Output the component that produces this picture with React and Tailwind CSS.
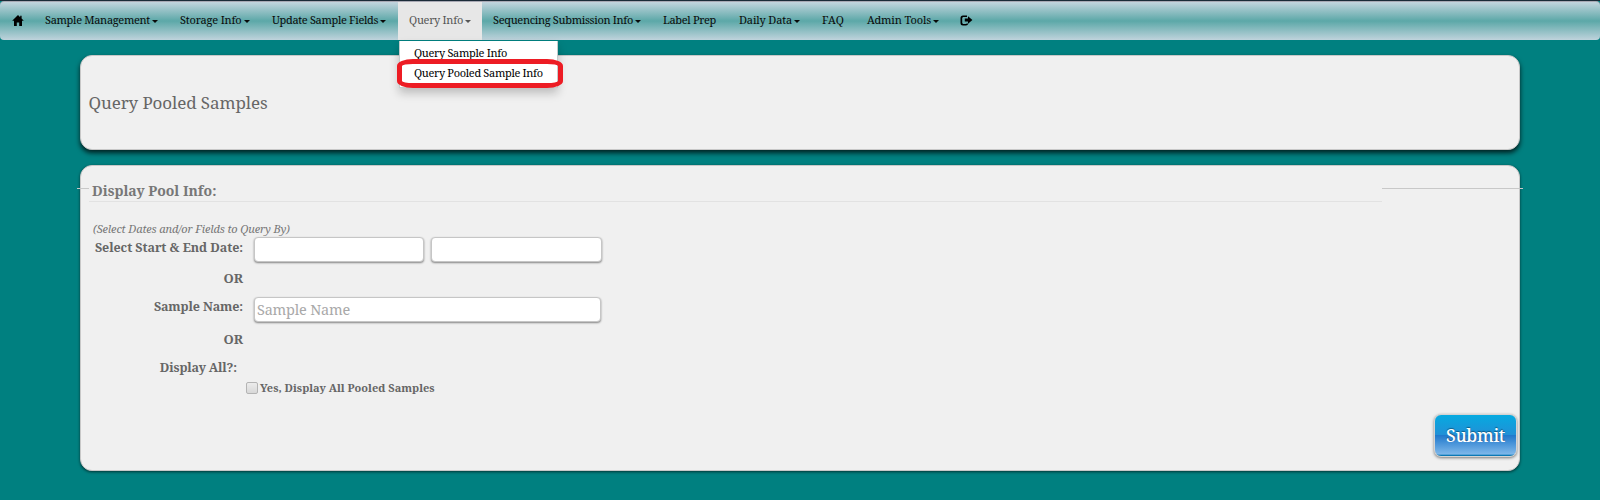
import React from "react";

const NAV = [
  { label: "Sample Management", box: "w-[135px]", track: "tracking-[-0.32px]", caret: true },
  { label: "Storage Info", box: "w-[92px]", track: "tracking-[-0.17px]", caret: true },
  { label: "Update Sample Fields", box: "w-[137px]", track: "tracking-[-0.33px]", caret: true },
  { label: "Query Info", box: "w-[84px]", track: "tracking-[-0.28px]", caret: true, open: true },
  { label: "Sequencing Submission Info", box: "w-[170px]", track: "tracking-[-0.32px]", caret: true },
  { label: "Label Prep", box: "w-[76px]", track: "tracking-[-0.34px]" },
  { label: "Daily Data", box: "w-[83px]", track: "tracking-[-0.15px]", caret: true },
  { label: "FAQ", box: "w-[45px]", track: "tracking-[0.3px]" },
  { label: "Admin Tools", box: "w-[94px]", track: "tracking-[-0.13px]", caret: true },
];

function Caret() {
  return <span className="ml-[2px] mt-[2px] border-x-[3px] border-t-[3px] border-x-transparent border-t-current" />;
}

function HomeIcon() {
  return (
    <svg width="12" height="11" viewBox="0 0 12 11" fill="#000">
      <path d="M6 0 0.2 5.8H2V11H4.8V7.4H7.2V11H10V5.8H11.8L9.6 3.6V0.8H8.2V2.2Z" />
    </svg>
  );
}

function LogoutIcon() {
  return (
    <svg width="13" height="11" viewBox="0 0 13 11" fill="#000">
      <path d="M7 0.5H3A2.5 2.5 0 0 0 0.5 3V8A2.5 2.5 0 0 0 3 10.5H6A2.5 2.5 0 0 0 8.3 8.6H6.6L6.2 8.9H3L2.2 8.1V3L3 2.1H7Z" />
      <path d="M8 1.3 12.4 5 8 8.7V6.6H4.8V3.4H8Z" />
    </svg>
  );
}

function QueryMenu() {
  return (
    <div className="absolute left-px top-[39px] z-10 h-[47px] w-[159px] border border-t-0 border-[#c4cccc] bg-white pt-[2px] text-black shadow-[0_5px_9px_rgba(0,0,0,0.22)]">
      <div className="h-5 pl-[14px] leading-5 tracking-[-0.31px]">Query Sample Info</div>
      <div className="h-5 pl-[14px] leading-5 tracking-[-0.32px]">Query Pooled Sample Info</div>
      <div className="absolute -left-[3px] top-[18px] h-[29px] w-[166px] rounded-[16px/7px] border-[5px] border-[#ed1c24]" />
    </div>
  );
}

function Field({ size, placeholder }) {
  return (
    <input
      className={`${size} h-[25px] rounded-[4px] border border-[#c6c6c6] bg-white pb-[2px] pl-[2px] text-[14.5px] tracking-[-0.22px] shadow-[0_1px_2px_rgba(0,0,0,0.45)] outline-none placeholder:text-[#a9a9a9]`}
      placeholder={placeholder}
    />
  );
}

export default function App() {
  return (
    <div className="h-[500px] w-[1600px] overflow-hidden bg-[#008080] font-['Noto_Serif','Liberation_Serif',serif] text-[#666]">
      <div className="h-px bg-[#1b2b38]" />
      <nav className="flex h-[39px] rounded-[4px] border-t border-[#a9a9b4] bg-[linear-gradient(#c3d5de_0%,#5ca8a8_50%,#bfd3dc_100%)] text-[11px] text-[#0a0a0a]">
        <div className="flex w-[34px] items-center pb-[2px] pl-[12px]">
          <HomeIcon />
        </div>
        {NAV.map((n) => (
          <div
            key={n.label}
            className={`relative flex items-center whitespace-nowrap pb-[2px] pl-[11px] ${n.box} ${n.open ? "bg-[#e7e7e7] text-[#555]" : ""}`}
          >
            <span className={n.track}>{n.label}</span>
            {n.caret && <Caret />}
            {n.open && <QueryMenu />}
          </div>
        ))}
        <div className="flex items-center pb-[2px] pl-[10px]">
          <LogoutIcon />
        </div>
      </nav>

      <main className="mx-[80px] mt-[15px] flex flex-col gap-[15px]">
        <section className="flex h-[95px] items-center rounded-[12px] border border-[#c8c8c8] bg-[#f0f0f0] pl-[7.5px] shadow-[0_3px_5px_rgba(0,0,0,0.75)]">
          <h1 className="text-[17px] tracking-[-0.1px]">Query Pooled Samples</h1>
        </section>

        <section className="h-[306px] rounded-[12px] border border-[#c8c8c8] bg-[#f0f0f0] shadow-[0_1px_3px_rgba(0,0,0,0.6)]">
          <div className="-mx-[4px] flex h-[36px]">
            <div className="mt-[22px] h-px w-[12px] bg-[#c8c8c8]" />
            <h2 className="h-[36px] w-[1293px] border-b border-[#e2e2e2] pl-[3px] pt-[14px] text-[14px] font-bold leading-[22px] text-[#777]">
              Display Pool Info:
            </h2>
            <div className="mt-[22px] h-px flex-1 bg-[#c8c8c8]" />
          </div>

          <p className="mt-[19px] h-[16px] pl-[12px] text-[11px] italic leading-[15px] tracking-[-0.12px] text-[#777]">
            (Select Dates and/or Fields to Query By)
          </p>
          <form className="text-[12.5px] font-bold leading-[18px]">
            <div className="flex h-[32px]">
              <label className="mr-[11px] mt-[2px] w-[162px] text-right tracking-[-0.07px]">Select Start &amp; End Date:</label>
              <div className="flex gap-[7px]">
                <Field size="w-[170px]" />
                <Field size="w-[171px]" />
              </div>
            </div>
            <div className="h-[28px] w-[162px] text-right text-[13px]">OR</div>
            <div className="flex h-[33px]">
              <label className="mr-[11px] mt-[1px] w-[162px] text-right tracking-[-0.12px]">Sample Name:</label>
              <div className="font-normal">
                <Field size="w-[347px]" placeholder="Sample Name" />
              </div>
            </div>
            <div className="h-[29px] w-[162px] text-right text-[13px]">OR</div>
            <div className="h-[20px] w-[156px] text-right tracking-[-0.15px]">Display All?:</div>
            <label className="flex h-[18px] items-center pl-[165px] text-[11px]">
              <span className="mr-[2px] h-[12px] w-[12px] rounded-[2px] border border-[#b4b4b4] bg-linear-to-b from-[#ececec] to-[#d8d8d8]" />
              Yes, Display All Pooled Samples
            </label>
            <div className="mt-[18px] flex justify-end pr-[3px]">
              <button
                type="button"
                className="h-[41px] w-[81px] rounded-[6px] bg-[linear-gradient(#06aae0_0%,#2190d6_49%,#2079cc_50%,#7fb8ea_96%,#0b78b5_97%)] pb-[1px] text-[17.5px] font-medium tracking-[-0.3px] text-white shadow-[0_0_0_1px_#d4d4d4,0_1px_3px_1px_rgba(0,0,0,0.5)] [text-shadow:0_-1px_1px_rgba(0,0,0,0.4)]"
              >
                Submit
              </button>
            </div>
          </form>
        </section>
      </main>
    </div>
  );
}
